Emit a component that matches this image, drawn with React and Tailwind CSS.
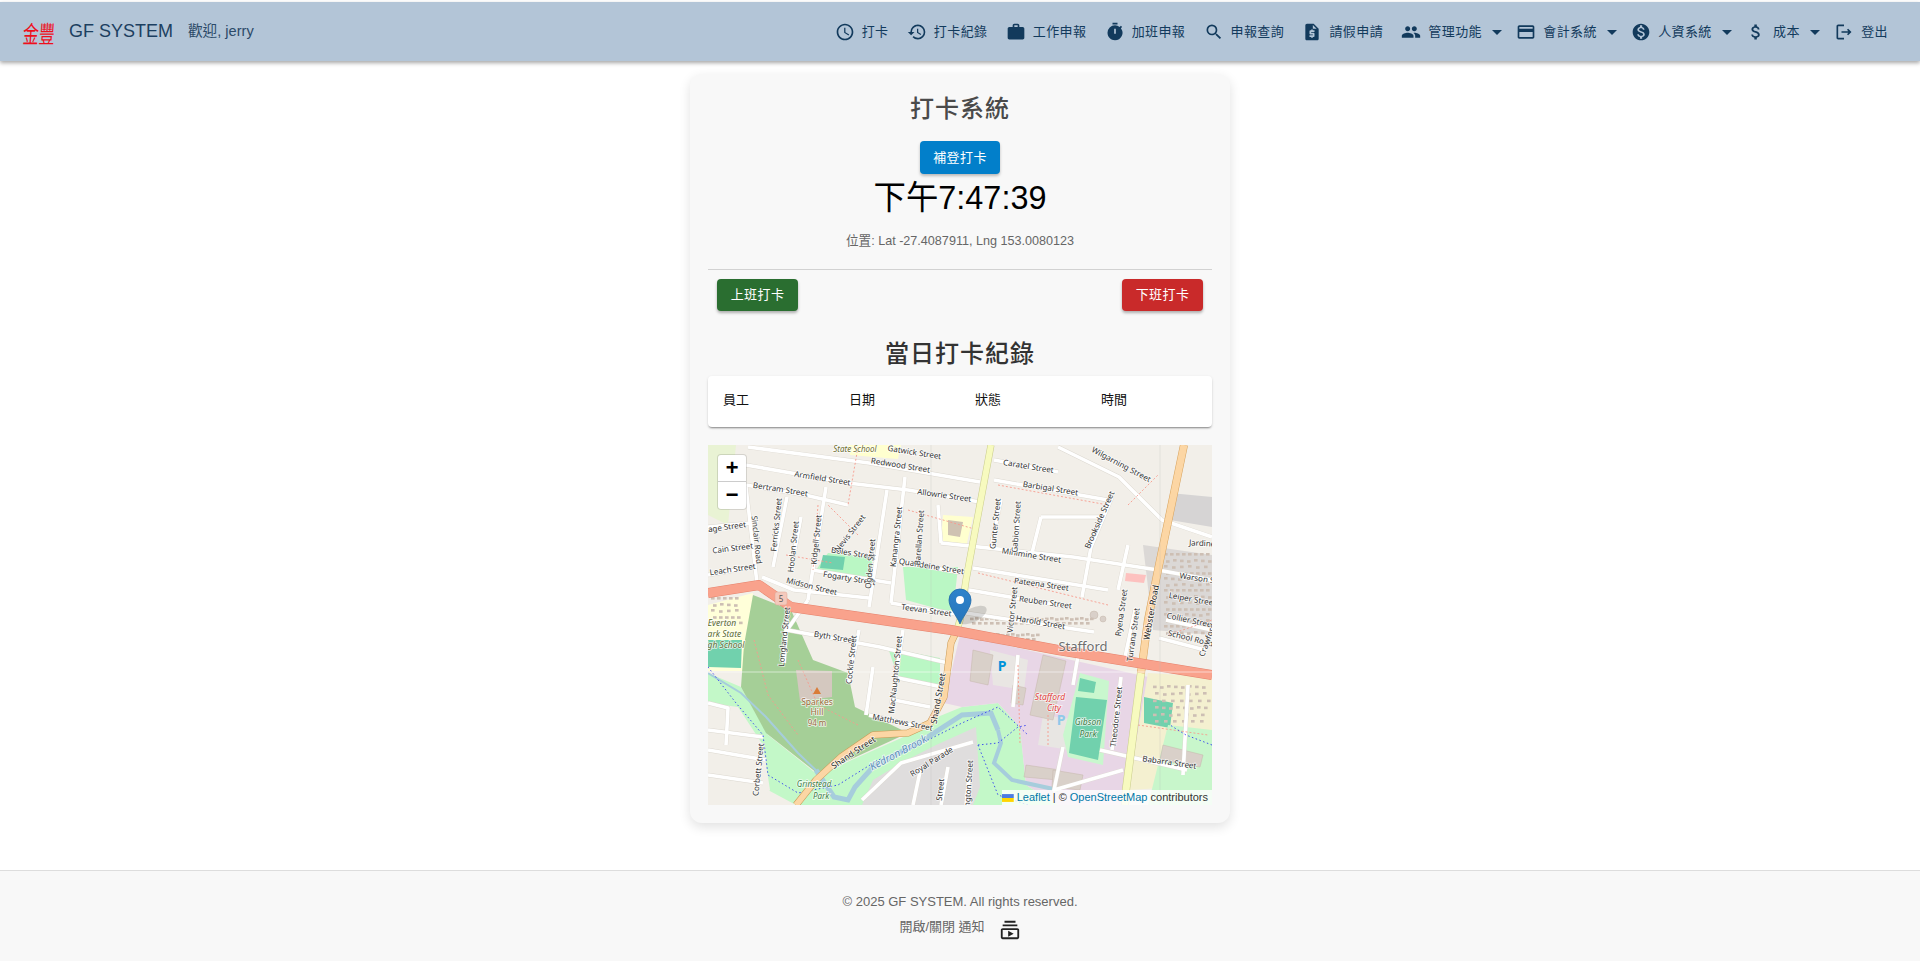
import {
  MdAccessTime,
  MdHistory,
  MdWork,
  MdTimer,
  MdSearch,
  MdRequestQuote,
  MdPeople,
  MdCreditCard,
  MdMonetizationOn,
  MdAttachMoney,
  MdOutlineLogout,
  MdArrowDropDown,
  MdOutlineSubscriptions,
} from "react-icons/md";

const navItems = [
  { label: "打卡", Icon: MdAccessTime },
  { label: "打卡紀錄", Icon: MdHistory },
  { label: "工作申報", Icon: MdWork },
  { label: "加班申報", Icon: MdTimer },
  { label: "申報查詢", Icon: MdSearch },
  { label: "請假申請", Icon: MdRequestQuote },
  { label: "管理功能", Icon: MdPeople, menu: true },
  { label: "會計系統", Icon: MdCreditCard, menu: true },
  { label: "人資系統", Icon: MdMonetizationOn, menu: true },
  { label: "成本", Icon: MdAttachMoney, menu: true },
  { label: "登出", Icon: MdOutlineLogout },
];

const streets = [
  "40,2 161,18 272,37",
  "38,20 140,38 200,45 272,57",
  "38,40 97,50 140,60",
  "350,2 411,32 454,75 504,92",
  "286,35 400,55",
  "286,15 350,27",
  "233,98 365,112 450,125 504,135",
  "265,123 400,145",
  "261,145 361,162",
  "258,168 386,187",
  "183,158 254,170",
  "186,115 254,128",
  "104,125 183,138",
  "54,132 86,145 161,153",
  "197,32 183,158",
  "79,52 65,122",
  "93,72 83,125",
  "118,42 100,155",
  "179,45 161,162",
  "230,60 233,98",
  "38,42 49,138",
  "0,82 43,78",
  "4,105 45,100",
  "0,130 45,122",
  "293,55 283,102",
  "311,58 308,105",
  "333,72 324,108",
  "333,72 397,72",
  "404,52 383,102 374,152",
  "79,185 172,202 240,218",
  "151,185 140,238",
  "195,185 183,262",
  "79,168 76,218",
  "165,222 158,270",
  "190,233 234,242",
  "161,270 218,283",
  "186,255 222,262",
  "0,258 20,263 18,300",
  "0,285 55,292",
  "0,305 58,315",
  "0,330 55,338",
  "154,355 193,318 265,297",
  "213,322 205,360",
  "240,322 233,360",
  "262,322 258,360",
  "413,232 404,305",
  "392,305 479,325",
  "427,165 417,212",
  "458,175 504,185",
  "451,193 497,205",
  "310,210 305,262",
  "371,205 365,240",
  "355,302 346,345 415,325",
  "480,240 475,330",
  "420,100 410,145",
  "100,155 79,185",
];

const footways = [
  "150,2 140,60",
  "110,60 105,125",
  "200,65 270,85",
  "78,110 125,118",
  "290,40 400,60",
  "420,60 450,30",
  "270,128 400,160",
  "150,90 120,60",
  "46,195 60,250 90,290",
  "90,215 110,260 150,280",
  "190,205 185,225",
  "310,220 312,300",
  "340,270 340,300",
  "430,280 500,290",
  "460,190 504,175",
];

const labels = [
  ["State School", 147, 7, 0, "#6b6b2e", true],
  ["Gatwick Street", 206, 10, 9],
  ["Redwood Street", 192, 23, 9],
  ["Armfield Street", 114, 36, 9],
  ["Bertram Street", 72, 47, 9],
  ["Allowrie Street", 236, 53, 8],
  ["Caratel Street", 320, 24, 9],
  ["Barbigal Street", 342, 46, 9],
  ["Wilgarning Street", 412, 22, 28],
  ["Page Street", 17, 85, -8],
  ["Cain Street", 25, 106, -7],
  ["Leach Street", 25, 127, -8],
  ["Boles Street", 145, 111, 9],
  ["Fogarty Street", 141, 136, 9],
  ["Midson Street", 103, 144, 14],
  ["Quandeine Street", 223, 124, 9],
  ["Teevan Street", 218, 168, 8],
  ["Minimine Street", 323, 113, 9],
  ["Pateena Street", 333, 142, 8],
  ["Reuben Street", 337, 160, 8],
  ["Harold Street", 332, 180, 10],
  ["Byth Street", 126, 195, 10],
  ["Matthews Street", 194, 280, 11],
  ["School Road", 482, 196, 14],
  ["Collier Street", 482, 178, 12],
  ["Leiper Street", 484, 157, 10],
  ["Warson St", 490, 136, 8],
  ["Jardine", 494, 101, 3],
  ["Babarra Street", 461, 320, 8],
  ["Royal Parade", 225, 319, -32],
  ["Ferricks Street", 71, 80, -84],
  ["Hoolan Street", 88, 102, -84],
  ["Kidgell Street", 111, 95, -84],
  ["Nevis Street", 144, 90, -52],
  ["Ogden Street", 165, 119, -85],
  ["Kanangra Street", 191, 92, -84],
  ["Barellan Street", 214, 93, -86],
  ["Gunter Street", 290, 79, -84],
  ["Gabion Street", 311, 82, -86],
  ["Brookside Street", 394, 76, -66],
  ["Victor Street", 307, 165, -84],
  ["Ryena Street", 416, 168, -82],
  ["Turrana Street", 428, 190, -82],
  ["Crawford", 502, 196, -70],
  ["Longland Street", 79, 192, -84],
  ["Cockle Street", 146, 215, -84],
  ["MacNaughton Street", 190, 230, -84],
  ["Theodore Street", 411, 272, -84],
  ["Corbett Street", 53, 325, -84],
  ["Arlington Street", 263, 345, -86],
  ["Street", 235, 345, -84],
  ["Sinclair Road", 46, 95, 84],
];

// small house footprints for the built-up blocks of the map
function houses(x0, y0, x1, y1, step) {
  const out = [];
  let row = 0;
  for (let y = y0; y < y1; y += step) {
    for (let x = x0 + (row % 2) * 2; x < x1; x += step + (row % 3)) {
      out.push([x, y + ((x * 7) % 3) * 0.6]);
    }
    row += 1;
  }
  return out;
}

const houseBlocks = [
  ...houses(262, 172, 384, 180, 5),
  ...houses(268, 188, 330, 198, 5),
  ...houses(456, 108, 504, 190, 6),
  ...houses(3, 152, 32, 178, 6),
  ...houses(445, 240, 500, 280, 7),
];

function MapDrawing() {
  return (
    <svg viewBox="0 0 504 360" className="block w-full h-full" xmlns="http://www.w3.org/2000/svg">
      <defs>
        <linearGradient id="pin" x1="0" y1="0" x2="0" y2="1">
          <stop offset="0" stopColor="#2e83cb" />
          <stop offset="1" stopColor="#2675bb" />
        </linearGradient>
      </defs>
      <rect width="504" height="360" fill="#f2efe9" />

      {/* land use */}
      <polygon points="0,160 45,148 36,226 0,226" fill="#ffffd9" />
      <polygon points="0,195 34,195 33,223 0,222" fill="#71d1ad" />
      <polygon points="0,228 33,242 60,290 110,330 200,290 222,275 254,262 290,258 312,282 318,340 350,360 88,360 60,345 0,300" fill="#c3f8c8" />
      <polygon points="0,258 30,262 55,300 62,345 50,360 0,360" fill="#f2efe9" />
      <polygon points="45,150 83,165 105,215 140,228 147,262 200,288 126,322 109,328 58,288 33,242 36,200" fill="#a5cf97" />
      <polygon points="88,225 124,226 124,252 92,256" fill="#d4c8bf" />
      <polygon points="268,282 272,342 265,360 154,360 165,335 193,318 228,300" fill="#dfdddd" />
      <polygon points="252,190 350,212 440,232 420,345 417,360 350,360 318,340 312,282 290,258 254,262 236,258" fill="#e8d6e6" />
      <polygon points="282,205 320,215 316,245 285,240" fill="#e9e6e3" />
      <polygon points="335,270 370,275 362,305 330,300" fill="#e8e6e3" />
      <polygon points="372,228 401,236 395,320 360,312 355,290" fill="#c9f7ce" />
      <polygon points="368,252 399,255 390,315 361,308" fill="#71d1ad" />
      <polygon points="372,233 388,237 386,248 370,246" fill="#71d1ad" />
      <polygon points="440,228 504,232 504,340 420,345" fill="#f4f0d0" />
      <polygon points="436,252 465,258 462,283 436,278" fill="#71d1ad" />
      <polygon points="460,280 504,285 504,360 440,360" fill="#c8f6cb" />
      <polygon points="120,108 165,112 162,132 108,125" fill="#baf7c4" />
      <polygon points="115,110 137,112 135,125 112,123" fill="#71d1ad" />
      <polygon points="195,122 250,122 245,168 198,155" fill="#baf7c4" />
      <polygon points="235,70 265,72 258,102 233,98" fill="#ffffcf" />
      <polygon points="240,75 255,77 252,92 240,90" fill="#cfc2b2" />
      <polygon points="140,0 193,0 190,14 142,10" fill="#ffffcf" />
      <polygon points="0,0 28,0 20,80 0,70" fill="#e9f3d4" />
      <polygon points="180,203 232,213 232,240 190,232" fill="#baf7c4" />
      <polygon points="435,100 504,110 504,190 445,185" fill="#dbd8d6" />
      <polygon points="462,48 504,52 504,82 462,75" fill="#d6d4d4" />
      <polygon points="418,128 438,130 436,138 417,136" fill="#fdc1bf" />

      {/* water */}
      <polyline points="290,285 283,268 254,270 215,295 165,322 147,342 140,355 126,352 108,325" fill="none" stroke="#a6cddc" strokeWidth="5" />
      <polyline points="0,228 33,248 58,272 90,308 115,332" fill="none" stroke="#a6cddc" strokeWidth="2" />
      <polyline points="290,285 293,298 286,318 304,335 350,345" fill="none" stroke="#a6cddc" strokeWidth="4" />

      {/* buildings */}
      <g fill="#d9d0c9" stroke="#c4b6ab" strokeWidth="0.5">
        <polygon points="265,205 285,210 280,240 262,236" />
        <polygon points="335,210 358,216 345,275 322,270" />
        <polygon points="305,240 318,243 315,260 303,258" />
        <polygon points="318,320 352,325 350,335 316,332" />
        <polygon points="345,325 375,330 372,345 344,342" />
        <polygon points="455,300 495,310 492,322 452,315" />
        <circle cx="386" cy="170" r="4" />
        <circle cx="395" cy="174" r="3" />
      </g>
      <g fill="#cdbfb4">
        {houseBlocks.map(([x, y]) => (
          <rect key={`${x}-${y}`} x={x} y={y} width="3.6" height="2.6" />
        ))}
      </g>

      {/* streets */}
      <g fill="none" stroke="#dcd8d0" strokeWidth="4.4" strokeLinejoin="round">
        {streets.map((s) => (
          <polyline key={s} points={s} />
        ))}
      </g>
      <g fill="none" stroke="#ffffff" strokeWidth="3.6" strokeLinejoin="round">
        {streets.map((s) => (
          <polyline key={s} points={s} />
        ))}
      </g>
      <g fill="none" stroke="#f79a8c" strokeWidth="0.9" strokeDasharray="2 2">
        {footways.map((s) => (
          <polyline key={s} points={s} />
        ))}
      </g>
      <g fill="none" stroke="#2f3bf0" strokeWidth="0.9" strokeDasharray="1.5 2.5">
        <polyline points="0,222 28,258 55,290 60,330 90,348 130,340 170,315 200,305 254,278 290,262 320,290" />
        <polyline points="270,300 290,298 310,282 320,280" />
        <polyline points="270,300 290,350 320,360" />
        <polyline points="504,300 478,290 462,280" />
      </g>

      {/* main roads */}
      <polyline points="283,0 258,135 252,175 249,185" fill="none" stroke="#c9cc8c" strokeWidth="7" />
      <polyline points="283,0 258,135 252,175 249,185" fill="none" stroke="#f7fabf" strokeWidth="6" />
      <polyline points="433,228 418,345 417,360" fill="none" stroke="#c9cc8c" strokeWidth="8" />
      <polyline points="433,228 418,345 417,360" fill="none" stroke="#f7fabf" strokeWidth="7" />
      <polyline points="476,0 450,125 440,175 433,228" fill="none" stroke="#d7a25c" strokeWidth="8" />
      <polyline points="476,0 450,125 440,175 433,228" fill="none" stroke="#fcd6a4" strokeWidth="7" />
      <polyline points="249,185 243,198 236,252 222,278 200,288 165,290 133,312 108,335 88,360" fill="none" stroke="#c99a55" strokeWidth="7" strokeLinejoin="round" />
      <polyline points="249,185 243,198 236,252 222,278 200,288 165,290 133,312 108,335 88,360" fill="none" stroke="#fcd6a4" strokeWidth="6" strokeLinejoin="round" />
      <polyline points="0,148 51,140 83,162 243,185 350,205 504,230" fill="none" stroke="#e5826c" strokeWidth="10" strokeLinejoin="round" />
      <polyline points="0,148 51,140 83,162 243,185 350,205 504,230" fill="none" stroke="#f9a28c" strokeWidth="9" strokeLinejoin="round" />

      {/* tile seams */}
      <line x1="0" y1="227" x2="504" y2="227" stroke="#ffffff" strokeWidth="0.7" opacity="0.8" />
      <line x1="223" y1="0" x2="223" y2="360" stroke="#bbbbbb" strokeWidth="0.5" opacity="0.5" />
      <line x1="452" y1="0" x2="452" y2="360" stroke="#bbbbbb" strokeWidth="0.5" opacity="0.5" />

      {/* labels */}
      <g fontFamily="'Noto Sans', sans-serif" fontSize="8" textAnchor="middle" stroke="#ffffff" strokeWidth="1.6" strokeOpacity="0.75" paintOrder="stroke">
        {labels.map(([text, x, y, rot, color, italic]) => (
          <text
            key={text + x}
            x={x}
            y={y}
            fill={color || "#333333"}
            fontStyle={italic ? "italic" : "normal"}
            transform={`rotate(${rot} ${x} ${y})`}
          >
            {text}
          </text>
        ))}
        <text x="375" y="206" fontSize="13" fill="#6e6e6e">Stafford</text>
        <text x="342" y="255" fontSize="8.5" fontStyle="italic" fill="#e03c3c">Stafford</text>
        <text x="346" y="266" fontSize="8.5" fontStyle="italic" fill="#e03c3c">City</text>
        <text x="380" y="280" fontSize="8.5" fontStyle="italic" fill="#3d7d46">Gibson</text>
        <text x="380" y="292" fontSize="8.5" fontStyle="italic" fill="#3d7d46">Park</text>
        <text x="109" y="260" fontSize="8.5" fill="#9a6a3c">Sparkes</text>
        <text x="109" y="270" fontSize="8.5" fill="#9a6a3c">Hill</text>
        <text x="109" y="281" fontSize="8" fill="#9a6a3c">94 m</text>
        <text x="106" y="342" fontSize="8" fontStyle="italic" fill="#3d7d46">Grinstead</text>
        <text x="113" y="354" fontSize="8" fontStyle="italic" fill="#3d7d46">Park</text>
        <text x="192" y="311" fontSize="10.5" fontStyle="italic" fill="#5d93b8" transform="rotate(-28 192 311)">Kedron Brook</text>
        <text x="147" y="310" fontSize="8.5" fill="#222222" transform="rotate(-34 147 310)">Shand Street</text>
        <text x="233" y="254" fontSize="8.5" fill="#222222" transform="rotate(-80 233 254)">Shand Street</text>
        <text x="446" y="168" fontSize="8.5" fill="#222222" transform="rotate(-80 446 168)">Webster Road</text>
        <text x="14" y="181" fontSize="8.5" fontStyle="italic" fill="#5b6b2f">Everton</text>
        <text x="14" y="192" fontSize="8.5" fontStyle="italic" fill="#5b6b2f">Park State</text>
        <text x="14" y="203" fontSize="8.5" fontStyle="italic" fill="#5b6b2f">High School</text>
      </g>

      {/* parking, shield, peak */}
      <text x="294" y="226" fontSize="14" fontWeight="700" fill="#0092da" textAnchor="middle" fontFamily="'Noto Sans', sans-serif">P</text>
      <text x="353" y="280" fontSize="14" fontWeight="700" fill="#8fc9ea" textAnchor="middle" fontFamily="'Noto Sans', sans-serif">P</text>
      <rect x="67" y="147" width="12" height="13" rx="2" fill="#f4c9bc" stroke="#dfa594" strokeWidth="0.5" />
      <text x="73" y="157" fontSize="8" fill="#555555" textAnchor="middle" fontFamily="'Noto Sans', sans-serif">5</text>
      <polygon points="109,242 113,249 105,249" fill="#d97c38" />

      {/* marker shadow and pin */}
      <ellipse cx="265" cy="170" rx="15" ry="7" fill="#000000" opacity="0.14" transform="rotate(-28 265 170)" />
      <path d="M252 179 C249 171 241 163 241 155 A11 11 0 0 1 263 155 C263 163 255 171 252 179 Z" fill="url(#pin)" stroke="#1f6aa8" strokeWidth="0.8" />
      <circle cx="252" cy="155" r="4" fill="#ffffff" />
    </svg>
  );
}

function LeafletMap() {
  return (
    <div className="relative mt-[18px] h-[360px] overflow-hidden">
      <MapDrawing />
      <div className="absolute left-[10px] top-[10px] flex w-[28px] flex-col overflow-hidden rounded-[3px] bg-white shadow-[0_0_0_1px_rgba(0,0,0,0.12)]">
        <div className="flex h-[27px] items-center justify-center border-b border-[#cccccc] pt-[4px] text-[22px] leading-none font-bold text-black [font-family:'Liberation_Mono',monospace]">+</div>
        <div className="flex h-[27px] items-center justify-center pt-[3px] text-[22px] leading-none font-bold text-black [font-family:'Liberation_Mono',monospace]">−</div>
      </div>
      <div className="absolute right-0 bottom-0 flex h-[15px] w-[210px] items-center justify-end bg-white/80 pr-[4px] text-[11px] leading-none whitespace-nowrap text-[#333333]">
        <svg viewBox="0 0 12 8" className="mr-[3px] h-[8px] w-[12px]">
          <rect width="12" height="4" fill="#4C7BE1" />
          <rect y="4" width="12" height="4" fill="#FFD500" />
        </svg>
        <span className="text-[#0078a8]">Leaflet</span>
        <span className="mx-[3px]">|</span>
        <span>©&nbsp;</span>
        <span className="text-[#0078a8]">OpenStreetMap</span>
        <span>&nbsp;contributors</span>
      </div>
    </div>
  );
}

function NavItem({ label, Icon, menu }) {
  return (
    <div className="flex items-center text-[13px] tracking-[0.4px] text-[#123a5c]">
      <Icon className="mr-[7px] text-[20px]" />
      <span>{label}</span>
      {menu && <MdArrowDropDown className="mr-[-11px] ml-[3px] text-[24px]" />}
    </div>
  );
}

function Header() {
  return (
    <header className="relative z-10 flex h-[59px] items-center justify-between bg-[#b3c5d7] pr-[32px] pl-[23px] shadow-[0_2px_4px_rgba(0,0,0,0.35)]">
      <div className="flex items-center">
        <div className="w-[34px] -skew-x-6 scale-y-150 text-[16px] leading-none whitespace-nowrap text-[#ee0f1c] [font-family:'Noto_Sans_CJK_TC',serif]">
          金豐
        </div>
        <span className="ml-[12px] text-[18px] text-[#1c3f60]">GF SYSTEM</span>
        <span className="ml-[15px] text-[14.6px] text-[#2c4a68]">歡迎, jerry</span>
      </div>
      <nav className="flex items-center gap-[18.3px]">
        {navItems.map((item) => (
          <NavItem key={item.label} {...item} />
        ))}
      </nav>
    </header>
  );
}

function ActionButton({ className, children }) {
  return (
    <button className={`flex h-[32px] w-[81px] items-center justify-center rounded-[4px] text-[13px] tracking-[0.4px] text-white shadow-[0_2px_3px_rgba(0,0,0,0.3)] ${className}`}>
      {children}
    </button>
  );
}

export default function App() {
  return (
    <div className="flex min-h-[961px] flex-col bg-white pt-[2px] [font-family:'Liberation_Sans','Noto_Sans_CJK_TC',sans-serif]">
      <Header />

      <main className="flex flex-1 justify-center pt-[13px]">
        <div className="h-[749px] w-[540px] rounded-[12px] bg-[#f8f8f8] px-[18px] pt-[18px] pb-[18px] shadow-[0_4px_12px_rgba(0,0,0,0.12)]">
          <h1 className="text-center text-[24px] leading-[34px] font-medium tracking-[1px] text-[#4a4a4a]">打卡系統</h1>

          <div className="mt-[15px] flex justify-center">
            <button className="h-[33px] w-[80px] rounded-[4px] bg-[#027fca] text-[13px] tracking-[0.4px] text-white shadow-[0_2px_3px_rgba(0,0,0,0.25)]">
              補登打卡
            </button>
          </div>

          <div className="text-center text-[32.4px] leading-[48px] text-black">下午7:47:39</div>
          <div className="mt-[8px] text-center text-[12.6px] leading-[22px] text-[#666666]">
            位置: Lat -27.4087911, Lng 153.0080123
          </div>

          <hr className="mt-[17px] border-[#d2d2d2]" />

          <div className="mt-[9px] flex justify-between px-[9px]">
            <ActionButton className="bg-[#2a6e30]">上班打卡</ActionButton>
            <ActionButton className="bg-[#c92a2a]">下班打卡</ActionButton>
          </div>

          <h2 className="mt-[26px] text-center text-[24px] leading-[34px] font-medium tracking-[1px] text-[#333333]">當日打卡紀錄</h2>

          <div className="mt-[5px] grid h-[51px] grid-cols-4 rounded-[4px] bg-white pt-[15px] text-[13px] leading-[18px] text-[#111111] shadow-[0_2px_2px_-1px_rgba(0,0,0,0.4),0_1px_3px_rgba(0,0,0,0.12)]">
            <span className="pl-[15px]">員工</span>
            <span className="pl-[15px]">日期</span>
            <span className="pl-[15px]">狀態</span>
            <span className="pl-[15px]">時間</span>
          </div>

          <LeafletMap />
        </div>
      </main>

      <footer className="flex h-[91px] flex-col items-center border-t border-[#dddddd] bg-[#f8f8f8] pt-[22px] text-[#666666]">
        <p className="text-[13px] leading-[18px]">© 2025 GF SYSTEM. All rights reserved.</p>
        <div className="mt-[5px] flex items-center">
          <span className="text-[13px] leading-[20px]">開啟/關閉 通知</span>
          <MdOutlineSubscriptions className="mt-[3px] mb-[-3px] ml-[14px] text-[22px] text-[#222222]" />
        </div>
      </footer>
    </div>
  );
}
